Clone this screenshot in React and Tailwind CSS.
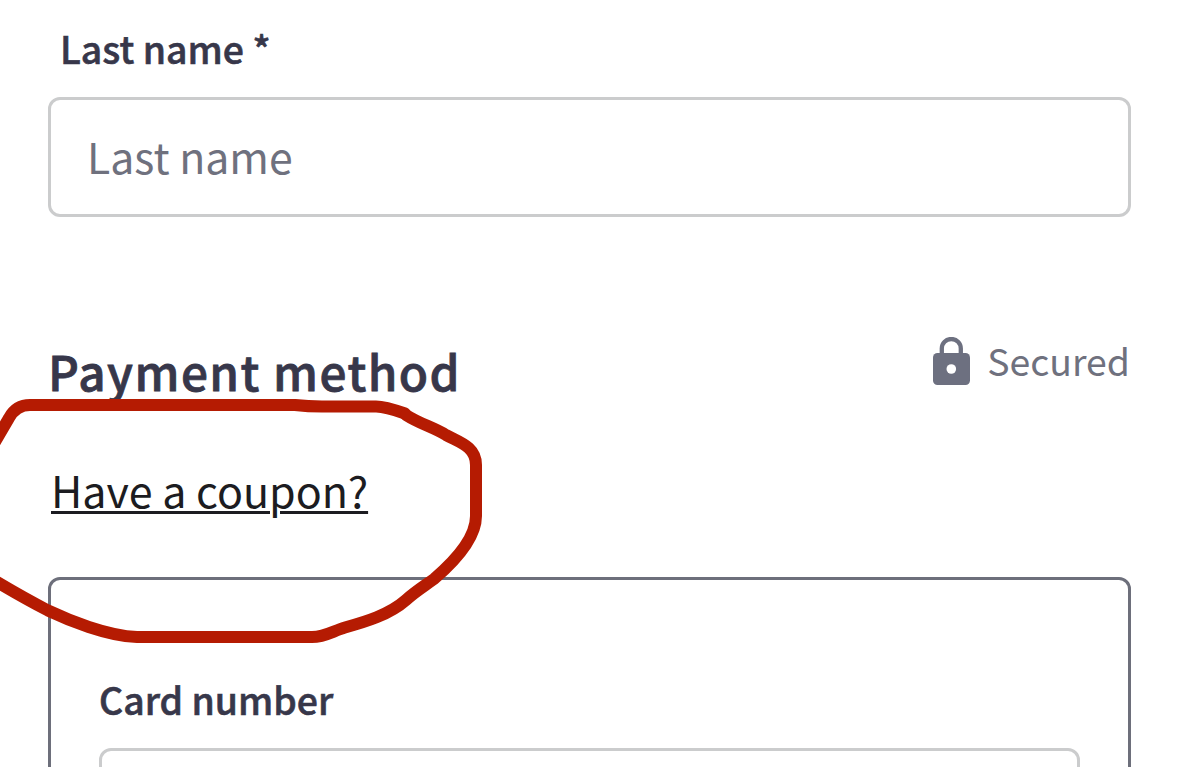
const FieldLabel = ({ children, className = "" }) => (
  <label
    className={`block whitespace-nowrap text-[37.4px] leading-[56px] font-medium text-[#37374a] [-webkit-text-stroke:0.6px_#37374a] ${className}`}
  >
    {children}
  </label>
);

const LockIcon = () => (
  <svg width="37" height="48" viewBox="0 0 37 48" fill="none">
    <path d="M8.800 18V11.500a9.500 9.500 0 0 1 19 0V18" stroke="#6d7080" strokeWidth="4.300" />
    <rect y="16" width="37" height="32" rx="4.500" fill="#6d7080" />
    <circle cx="18.300" cy="32" r="4.800" fill="#fff" />
  </svg>
);

// red pen circle drawn around the coupon link
const CouponMarker = () => (
  <svg
    className="pointer-events-none absolute top-0 left-0"
    width="1179"
    height="767"
    fill="none"
    stroke="#b51b02"
    strokeWidth="12"
    strokeLinejoin="round"
    strokeLinecap="round"
  >
    <path d="M-8 447L9 418Q16 405 30 405H295Q308 406.500 322 406.500H376Q385 406.500 405 413.500" />
    <path d="M406 415C420 424 433 427 446 435C458 442 476 446 476 465V516C476 538 455 561 434 579C423 587 416 591 406 600C389 615 365 622 345 627.500C333 631 325 637 312 637H137C107 636 68 620 48 610.500Q22 597 -8 579" />
  </svg>
);

const App = () => {
  return (
    <div className="relative h-[767px] w-[1179px] overflow-hidden bg-white px-12 pt-5 font-['Noto_Sans_CJK_SC',sans-serif]">
      <FieldLabel className="pl-[12px]">Last name *</FieldLabel>
      <input
        type="text"
        placeholder="Last name"
        className="mt-[21px] block h-[120px] w-[1083px] rounded-xl border-[3px] border-[#cbcccd] px-9 pb-1 text-[42.8px] text-[#6f717e] placeholder:text-[#6f717e]"
      />

      <div className="mt-[112px] flex h-[90px] items-start justify-between">
        <h2 className="mt-[6px] text-[47.7px] leading-[72px] font-medium tracking-[1.45px] text-[#37374a] [-webkit-text-stroke:0.8px_#37374a]">
          Payment method
        </h2>
        <div className="mt-2 mr-px flex items-start text-[#6f717e]">
          <LockIcon />
          <span className="ml-[17px] text-[37.4px] leading-[46px]">Secured</span>
        </div>
      </div>

      <a
        href="#coupon"
        className="mt-[37px] ml-[3px] block w-fit text-[43px] leading-[66px] text-[#1c1c21] underline decoration-[3px] underline-offset-[3px]"
      >
        Have a coupon?
      </a>

      <div className="mt-[55px] h-[300px] w-[1083px] rounded-xl border-[3px] border-[#6d6f7b] px-12 pt-[91px]">
        <FieldLabel>Card number</FieldLabel>
        <div className="mt-[21px] h-[120px] rounded-xl border-[3px] border-[#cbcccd]" />
      </div>

      <CouponMarker />
    </div>
  );
};

export default App;
